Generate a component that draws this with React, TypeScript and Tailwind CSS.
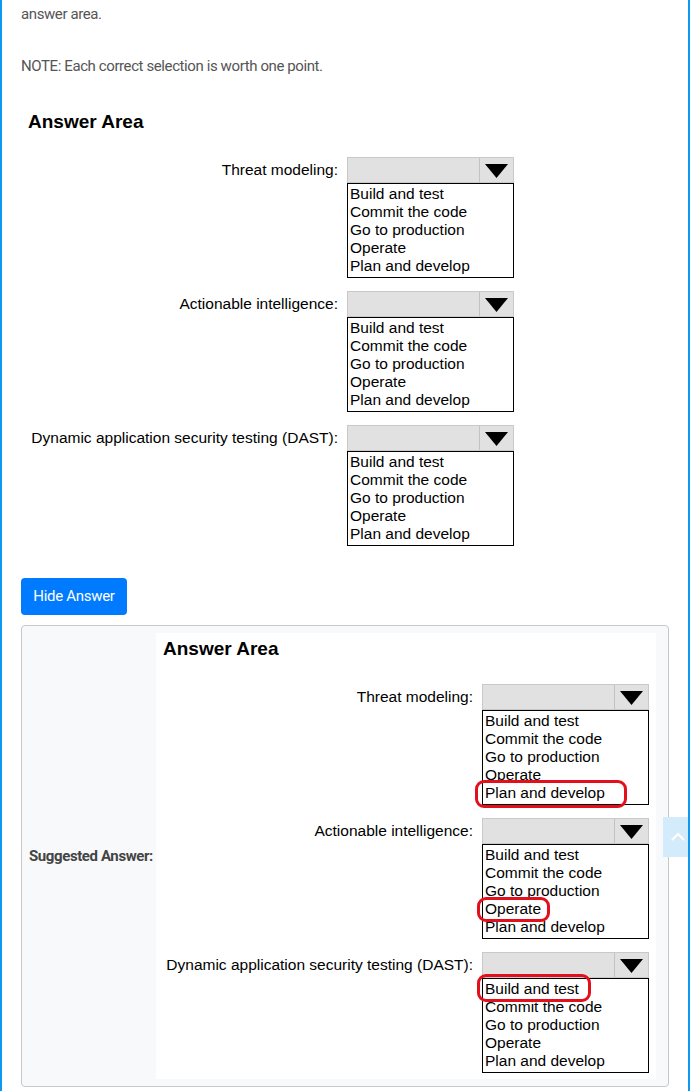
import React from "react";

type Mark = { left: number; top: number; width: number; height: number } | null;

const OPTIONS = ["Build and test", "Commit the code", "Go to production", "Operate", "Plan and develop"];
const LABELS = ["Threat modeling:", "Actionable intelligence:", "Dynamic application security testing (DAST):"];

function Dropdown({ mark }: { mark: Mark }) {
  return (
    <div className="w-[167px] flex flex-col">
      <div className="h-[26px] flex bg-[#e1e1e1] border border-[#c9c9c9]">
        <div className="flex-1 border-r border-[#c2c2c2]" />
        <div className="w-[33px] flex items-center justify-center">
          <svg width="23" height="15" viewBox="0 0 23 15">
            <polygon points="0,1 23,1 11.5,15" fill="#000" />
          </svg>
        </div>
      </div>
      <div className="relative h-[95px] border border-black bg-white pt-[1px] pl-[2px]">
        {OPTIONS.map((o) => (
          <div key={o} className="h-[18px] leading-[18px] text-[15.5px] text-black whitespace-nowrap">
            {o}
          </div>
        ))}
        {mark && (
          <div
            className="absolute border-[3px] border-[#e3101c] rounded-[9px]"
            style={{ left: mark.left, top: mark.top, width: mark.width, height: mark.height }}
          />
        )}
      </div>
    </div>
  );
}

function AnswerArea({ marks, bottom }: { marks: Mark[]; bottom: number }) {
  return (
    <div className="w-[500px] bg-white" style={{ fontFamily: "Arial, 'Liberation Sans', sans-serif", paddingBottom: bottom }}>
      <div className="pt-[5px] pl-[7px] h-[51px] text-[19px] leading-[22px] font-bold text-black">Answer Area</div>
      <div className="flex flex-col gap-[13px]">
        {LABELS.map((l, i) => (
          <div key={l} className="flex gap-[9px]">
            <div className="w-[317px] h-[26px] flex items-center justify-end text-[15.5px] text-black whitespace-nowrap">
              {l}
            </div>
            <Dropdown mark={marks[i]} />
          </div>
        ))}
      </div>
    </div>
  );
}

export default function App() {
  return (
    <div
      className="relative w-[690px] min-h-[1091px] bg-white border-l-2 border-r-2 border-[#0a9af0] overflow-hidden"
      style={{ fontFamily: "Roboto, 'Liberation Sans', sans-serif" }}
    >
      <div className="pl-[19px] pr-[20px]">
        <p className="pt-[4px] text-[15px] leading-[21px] text-[#555] tracking-[-0.4px]">answer area.</p>
        <p className="mt-[31px] text-[15px] leading-[21px] text-[#555] tracking-[-0.4px]">
          NOTE: Each correct selection is worth one point.
        </p>
        <div className="mt-[29px]">
          <AnswerArea marks={[null, null, null]} bottom={6} />
        </div>
        <button className="mt-[26px] w-[106px] h-[37px] rounded-[4px] bg-[#007bff] text-white text-[15px] tracking-[-0.3px] flex items-center justify-center">
          Hide Answer
        </button>
        <div className="mt-[10px] w-[648px] border border-[#c8c8c8] rounded-[4px] bg-[#f8f9fa] flex pt-[7px] pb-[7px]">
          <div className="w-[134px] flex items-center pl-[7px] text-[15px] font-bold text-[#444] tracking-[-0.4px] whitespace-nowrap">
            Suggested Answer:
          </div>
          <AnswerArea
            bottom={6}
            marks={[
              { left: -8, top: 69, width: 152, height: 28 },
              { left: -6, top: 52, width: 73, height: 25 },
              { left: -6, top: -5, width: 114, height: 28 },
            ]}
          />
        </div>
      </div>
      <div className="absolute left-[661px] top-[817px] w-[30px] h-[40px] bg-[#d3ebfa] flex items-center justify-center">
        <svg width="16" height="10" viewBox="0 0 16 10">
          <polyline points="2,8 8,2 14,8" fill="none" stroke="#fff" strokeWidth="2.2" />
        </svg>
      </div>
    </div>
  );
}
